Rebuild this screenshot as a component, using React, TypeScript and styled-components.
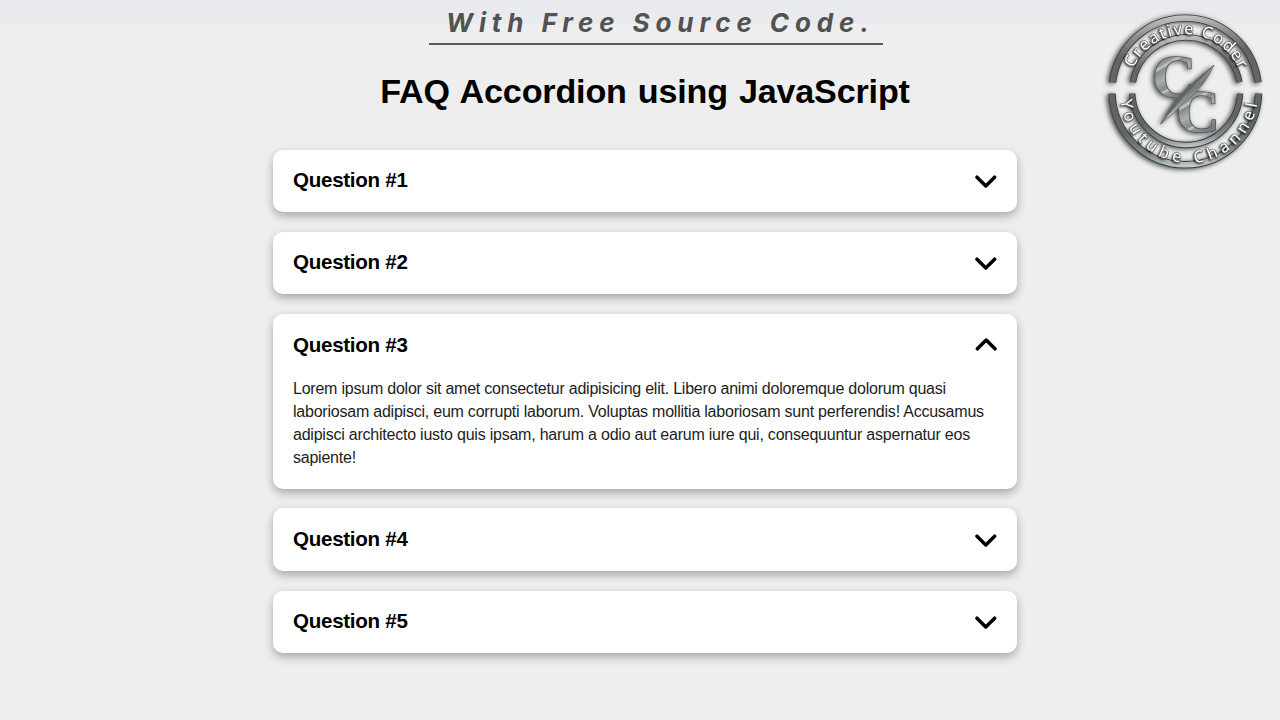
import React, { useState } from "react";
import styled, { createGlobalStyle } from "styled-components";

const GlobalStyle = createGlobalStyle`
  * { box-sizing: border-box; }
  body {
    margin: 0;
    background: #eeeeee;
    font-family: "Liberation Sans", Arial, sans-serif;
    overflow: hidden;
  }
`;

const Page = styled.div`
  position: relative;
  height: 720px;
  display: flex;
  flex-direction: column;
  background: linear-gradient(#e9eaee 24px, #eeeeee 24px);
`;

const Caption = styled.div`
  width: 454px;
  height: 45px;
  margin-left: 429px;
  padding: 7px 0 0 17px;
  border-bottom: 2px solid #555957;
  color: #505352;
  font: italic 700 26px/32px Inter, sans-serif;
  letter-spacing: 5.9px;
  white-space: nowrap;
`;

const Title = styled.h1`
  width: 744px;
  margin: 25.5px 0 39.1px 273px;
  font-size: 34.1px;
  line-height: 40px;
  font-weight: 700;
  letter-spacing: -0.15px;
  word-spacing: 1.7px;
  text-align: center;
  color: #000;
  white-space: nowrap;
`;

const List = styled.div`
  width: 744px;
  margin-left: 273px;
  display: flex;
  flex-direction: column;
  gap: 19.6px;
`;

const Card = styled.section<{ $open: boolean }>`
  height: ${(p) => (p.$open ? 174.8 : 62.6)}px;
  padding: 0 20px;
  border-radius: 10px;
  background: #fff;
  box-shadow: 0 4px 10px rgba(0, 0, 0, 0.3);
`;

const Header = styled.button`
  width: 100%;
  height: 62.6px;
  padding: 0;
  border: 0;
  background: none;
  display: flex;
  align-items: center;
  justify-content: space-between;
  font: 700 20.6px "Liberation Sans", Arial, sans-serif;
  letter-spacing: -0.3px;
  color: #000;
  text-align: left;
`;

const Label = styled.span`
  padding-bottom: 1.4px;
`;

const Chevron = styled.svg<{ $open: boolean }>`
  width: 22px;
  height: 14px;
  fill: none;
  stroke: #000;
  stroke-width: 3.5;
  stroke-linecap: round;
  stroke-linejoin: round;
  transform: ${(p) => (p.$open ? "rotate(180deg)" : "none")};
`;

const Answer = styled.p`
  margin: 0;
  font-size: 16px;
  letter-spacing: -0.226px;
  line-height: 23.25px;
  color: #1d1d1d;
  white-space: nowrap;
`;

const Line = styled.span`
  display: block;
`;

const Badge = styled.svg`
  position: absolute;
  left: 1095px;
  top: 5px;
  width: 180px;
  height: 170px;
`;

const answer = [
  "Lorem ipsum dolor sit amet consectetur adipisicing elit. Libero animi doloremque dolorum quasi",
  "laboriosam adipisci, eum corrupti laborum. Voluptas mollitia laboriosam sunt perferendis! Accusamus",
  "adipisci architecto iusto quis ipsam, harum a odio aut earum iure qui, consequuntur aspernatur eos",
  "sapiente!",
];

function Ring({ d, width, fill }: { d: string; width: number; fill: string }) {
  return (
    <g fill="none">
      <path d={d} stroke="#343938" strokeWidth={width} />
      <path d={d} stroke={fill} strokeWidth={width - 5} />
    </g>
  );
}

function Steel({ id, top, bottom }: { id: string; top: number; bottom: number }) {
  return (
    <linearGradient id={id} gradientUnits="userSpaceOnUse" x1="250" y1={top} x2="280" y2={bottom}>
      <stop offset="0" stopColor="#c6c8c7" />
      <stop offset=".12" stopColor="#8f9291" />
      <stop offset=".25" stopColor="#636665" />
      <stop offset=".5" stopColor="#626562" />
      <stop offset=".75" stopColor="#5f6768" />
      <stop offset=".9" stopColor="#838d8f" />
      <stop offset="1" stopColor="#ccd3d5" />
    </linearGradient>
  );
}

function ChannelBadge() {
  return (
    <Badge viewBox="0 0 540 510">
      <defs>
        <Steel id="steelOuter" top={28} bottom={490} />
        <Steel id="steelInner" top={92} bottom={432} />
        <linearGradient id="plate" gradientUnits="userSpaceOnUse" x1="180" y1="160" x2="214" y2="218" spreadMethod="reflect">
          <stop offset="0" stopColor="#747a79" />
          <stop offset=".4" stopColor="#959a99" />
          <stop offset=".5" stopColor="#c6c9c8" />
          <stop offset=".6" stopColor="#858b8a" />
          <stop offset="1" stopColor="#aaafae" />
        </linearGradient>
        <filter id="drop" x="-20%" y="-20%" width="140%" height="140%">
          <feDropShadow dx="-6" dy="3" stdDeviation="8" floodColor="#000" floodOpacity=".7" />
        </filter>
        <filter id="letter" x="-20%" y="-20%" width="140%" height="140%">
          <feDropShadow dx="-3" dy="3" stdDeviation="2.5" floodColor="#000" floodOpacity=".85" />
        </filter>
        <path id="topText" d="M 115 190 A 173 173 0 0 1 432 193" />
        <path id="bottomText" d="M 77 286 A 206 206 0 0 0 487 290" />
      </defs>
      <g filter="url(#drop)">
        <Ring d="M 52.7 232 A 220 220 0 0 1 489.3 232" width={22} fill="url(#steelOuter)" />
        <Ring d="M 113.8 232 A 162 162 0 0 1 433.2 232" width={19} fill="url(#steelInner)" />
        <Ring d="M 51.1 266 A 220 220 0 0 0 490.9 266" width={22} fill="url(#steelOuter)" />
        <Ring d="M 111.7 266 A 162 162 0 0 0 435.3 266" width={19} fill="url(#steelInner)" />
      </g>
      <g
        filter="url(#letter)"
        fill="#ffffff"
        stroke="#4a4f4e"
        strokeWidth="3"
        paintOrder="stroke"
        fontFamily="Noto Sans, sans-serif"
        fontSize="49"
      >
        <text>
          <textPath href="#topText" textLength="400">Creative Coder</textPath>
        </text>
        <text>
          <textPath href="#bottomText" textLength="600">Youtube Channel</textPath>
        </text>
      </g>
      <g filter="url(#drop)" fill="url(#plate)" stroke="#4d5453" strokeWidth="5" paintOrder="stroke" strokeLinejoin="round">
        <g fontFamily="Liberation Serif, serif" fontWeight="700" fontSize="182">
          <text x="172" y="275">C</text>
          <text x="243" y="380">C</text>
        </g>
        <path d="M357 180 Q326 246 277 284 L197 357 Q234 288 276 249 Z" strokeWidth="3" />
        <path d="M357 180 L262 279 L197 357 Q234 288 276 249 Z" fill="#5d6665" stroke="none" />
      </g>
    </Badge>
  );
}

export default function App() {
  const [open, setOpen] = useState(3);
  return (
    <>
      <GlobalStyle />
      <Page>
        <Caption>With Free Source Code.</Caption>
        <Title>FAQ Accordion using JavaScript</Title>
        <List>
          {[1, 2, 3, 4, 5].map((n) => (
            <Card key={n} $open={open === n}>
              <Header onClick={() => setOpen(open === n ? 0 : n)}>
                <Label>Question #{n}</Label>
                <Chevron $open={open === n} viewBox="0 0 22 14">
                  <path d="M2 3.2 L10.8 12 L19.6 3.2" />
                </Chevron>
              </Header>
              {open === n && (
                <Answer>
                  {answer.map((line) => (
                    <Line key={line}>{line}</Line>
                  ))}
                </Answer>
              )}
            </Card>
          ))}
        </List>
        <ChannelBadge />
      </Page>
    </>
  );
}
